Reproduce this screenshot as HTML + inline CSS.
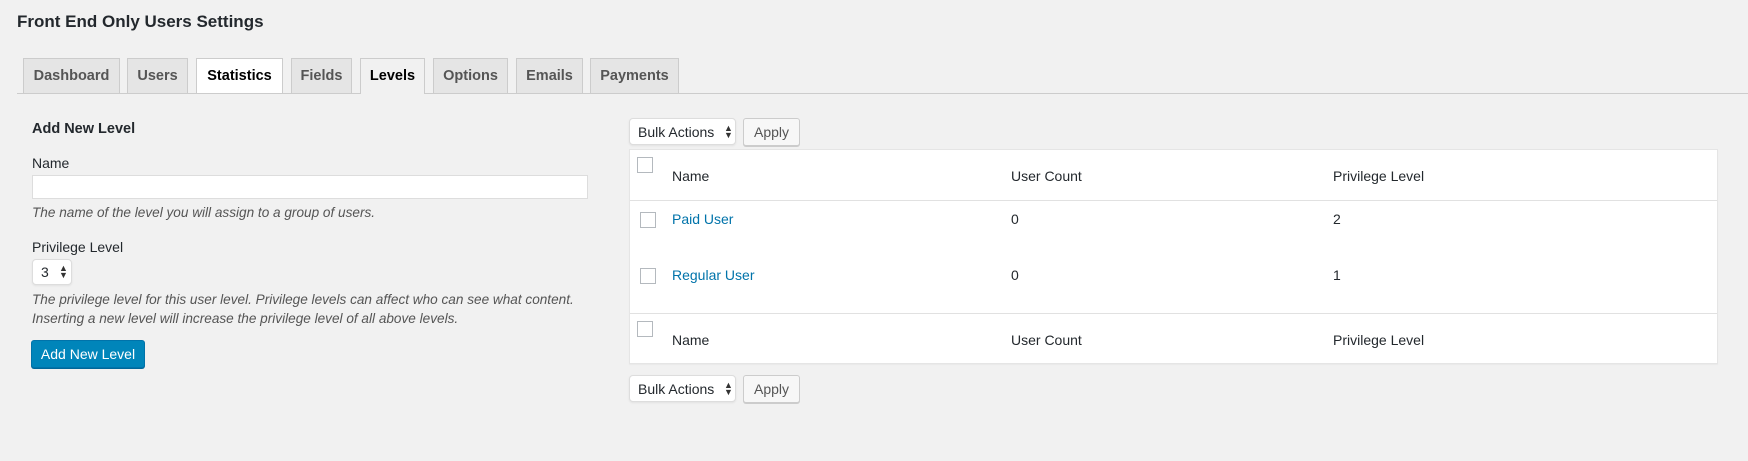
<!DOCTYPE html>
<html><head><style>
body{margin:0;width:1748px;height:461px;background:#f1f1f1;font-family:"Liberation Sans",sans-serif;color:#23282d;font-size:14px;position:relative;overflow:hidden}
.a{position:absolute;white-space:nowrap}
.tab{position:absolute;top:58px;height:35px;background:#e5e5e5;border:1px solid #ccc;border-bottom:none;box-sizing:border-box;font-weight:bold;font-size:14.5px;color:#555;text-align:center;line-height:34px}
.tab.w{background:#fff;color:#000}
.tab.act{background:#f1f1f1;color:#000;height:36px}
.cb{position:absolute;width:16px;height:16px;border:1px solid #b4b9be;background:#fff;box-sizing:border-box}
.sel{position:absolute;background:#fff;border:1px solid #ddd;border-radius:4px;box-sizing:border-box;box-shadow:0 1px 2px rgba(0,0,0,.07)}
.btn{position:absolute;background:#f7f7f7;border:1px solid #ccc;border-radius:3px;box-sizing:border-box;box-shadow:0 1px 0 #ccc;text-align:center;font-size:14px;color:#555}
i{font-style:italic;color:#555;font-size:13.6px}
</style></head><body>
<div class="a" style="left:17px;top:12px;font-size:17px;font-weight:bold">Front End Only Users Settings</div>
<div class="a" style="left:17px;top:93px;width:1731px;height:1px;background:#ccc"></div>
<div class="tab" style="left:23px;width:97px">Dashboard</div>
<div class="tab" style="left:127px;width:61px">Users</div>
<div class="tab w" style="left:196px;width:87px">Statistics</div>
<div class="tab" style="left:291px;width:61px">Fields</div>
<div class="tab act" style="left:360px;width:65px">Levels</div>
<div class="tab" style="left:433px;width:75px">Options</div>
<div class="tab" style="left:516px;width:67px">Emails</div>
<div class="tab" style="left:590px;width:89px">Payments</div>

<div class="a" style="left:32px;top:121px;font-weight:bold;font-size:14.5px">Add New Level</div>
<div class="a" style="left:32px;top:155px">Name</div>
<div class="a" style="left:32px;top:175px;width:556px;height:24px;background:#fff;border:1px solid #ddd;box-sizing:border-box"></div>
<div class="a" style="left:32px;top:204px"><i>The name of the level you will assign to a group of users.</i></div>
<div class="a" style="left:32px;top:239px">Privilege Level</div>
<div class="sel" style="left:32px;top:259px;width:40px;height:26px"><span class="a" style="left:8px;top:4px">3</span><span class="a" style="left:26px;top:5px;font-size:9px;line-height:7px;color:#333">▲<br>▼</span></div>
<div class="a" style="left:32px;top:290px;line-height:19px"><i>The privilege level for this user level. Privilege levels can affect who can see what content.<br>Inserting a new level will increase the privilege level of all above levels.</i></div>
<div class="a" style="left:31px;top:340px;width:114px;height:28px;background:#0085ba;border:1px solid #0073aa;border-radius:3px;box-sizing:border-box;color:#fff;text-align:center;line-height:26px;font-size:14px;box-shadow:0 1px 0 #006799">Add New Level</div>

<div class="sel" style="left:629px;top:118px;width:107px;height:27px"><span class="a" style="left:8px;top:5px">Bulk Actions</span><span class="a" style="left:94px;top:6px;font-size:9px;line-height:7px;color:#333">▲<br>▼</span></div>
<div class="btn" style="left:743px;top:118px;width:57px;height:28px;line-height:26px">Apply</div>

<div class="a" style="left:629px;top:149px;width:1089px;height:215px;background:#fff;border:1px solid #e5e5e5;box-sizing:border-box;box-shadow:0 1px 1px rgba(0,0,0,.04)"></div>
<div class="a" style="left:630px;top:200px;width:1087px;height:1px;background:#e1e1e1"></div>
<div class="a" style="left:630px;top:313px;width:1087px;height:1px;background:#e1e1e1"></div>
<div class="cb" style="left:637px;top:157px"></div>
<div class="a" style="left:672px;top:168px">Name</div>
<div class="a" style="left:1011px;top:168px">User Count</div>
<div class="a" style="left:1333px;top:168px">Privilege Level</div>
<div class="cb" style="left:640px;top:212px"></div>
<div class="a" style="left:672px;top:211px;color:#0073aa">Paid User</div>
<div class="a" style="left:1011px;top:211px">0</div>
<div class="a" style="left:1333px;top:211px">2</div>
<div class="cb" style="left:640px;top:268px"></div>
<div class="a" style="left:672px;top:267px;color:#0073aa">Regular User</div>
<div class="a" style="left:1011px;top:267px">0</div>
<div class="a" style="left:1333px;top:267px">1</div>
<div class="cb" style="left:637px;top:321px"></div>
<div class="a" style="left:672px;top:332px">Name</div>
<div class="a" style="left:1011px;top:332px">User Count</div>
<div class="a" style="left:1333px;top:332px">Privilege Level</div>

<div class="sel" style="left:629px;top:375px;width:107px;height:27px"><span class="a" style="left:8px;top:5px">Bulk Actions</span><span class="a" style="left:94px;top:6px;font-size:9px;line-height:7px;color:#333">▲<br>▼</span></div>
<div class="btn" style="left:743px;top:375px;width:57px;height:28px;line-height:26px">Apply</div>
</body></html>
